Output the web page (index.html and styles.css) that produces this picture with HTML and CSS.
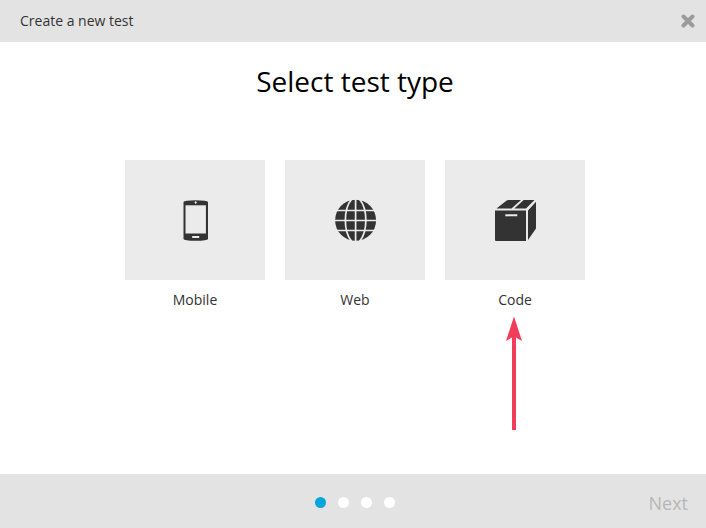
FILE: index.html
```html
<!DOCTYPE html>
<html lang="en">
<head>
<meta charset="utf-8">
<title>Create a new test</title>
<link rel="stylesheet" href="styles.css">
</head>
<body>
<div class="dialog">
  <header class="dialog-header">
    <span>Create a new test</span>
    <button class="close" aria-label="Close"><svg width="14" height="14" viewBox="0 0 14 14"><path d="M2.5 2.5l9 9M11.5 2.5l-9 9" stroke="#9b9b9b" stroke-width="4" stroke-linecap="round"/></svg></button>
  </header>
  <main class="content">
    <h1>Select test type</h1>
    <div class="options">
      <div class="option">
        <div class="tile">
          <svg width="42" height="42" viewBox="0 0 42 42"><path d="M8.5 3Q9 1.2 20.7 1.2T33 3V40Q32.5 41.8 20.7 41.8T8.5 40Z" fill="#333"/><path d="M10.5 6.3h20.4v28.2H10.5z" fill="#ebebeb"/><path d="M17.2 37h7v2h-7zM20.7 2l1.3 1.5-1.3 1.5-1.3-1.5z" fill="#ebebeb"/></svg>
        </div>
        <span>Mobile</span>
      </div>
      <div class="option">
        <div class="tile">
          <svg width="42" height="42" viewBox="0 0 42 42"><circle cx="20.6" cy="21.3" r="20.5" fill="#333"/><g fill="none" stroke="#ebebeb" stroke-width="1.7"><path d="M20.6 0v42M0 21.5h42M2 11.5h38M2 31.5h38"/><path d="M16.8 0C8.2 10 8.2 32.6 16.8 42.6M24.4 0C33 10 33 32.6 24.4 42.6"/></g></svg>
        </div>
        <span>Web</span>
      </div>
      <div class="option">
        <div class="tile">
          <svg width="42" height="42" viewBox="0 0 42 42"><path d="M0 11.5h31V42H1Q0 42 0 41zM1.5 9.5L11.7 1.6Q12.5 1 13.5 1H26L16.5 9.5zM19.3 9.5L28.7 1H39.5L31 9.5zM33 11.5L41 2.7V29.5L33 41z" fill="#333"/><path d="M10.3 15.3h12v2h-12z" fill="#ebebeb"/></svg>
        </div>
        <span>Code</span>
        <svg class="arrow" width="18" height="115" viewBox="0 0 18 115"><path d="M9 1.5L17 26 11 22.5V115H7V22.5L1 26z" fill="#f13d5a"/></svg>
      </div>
    </div>
  </main>
  <footer class="dialog-footer">
    <div class="dots"><i class="active"></i><i></i><i></i><i></i></div>
    <button class="next" disabled>Next</button>
  </footer>
</div>
</body>
</html>
```
FILE: styles.css
```css
* { box-sizing: border-box; }
body { margin: 0; background: #fff; color: #333; font: 14px/20px "Open Sans", sans-serif; }
button { border: 0; padding: 0; background: none; font: inherit; }
.dialog { height: 528px; display: flex; flex-direction: column; overflow: hidden; }
.dialog-header { flex: 0 0 42px; display: flex; align-items: center; justify-content: space-between; padding: 0 11px 0 20px; background: #e3e3e3; }
.close { display: flex; }
.content { flex: 1; padding: 19px 0 0 4px; }
h1 { margin: 0; text-align: center; color: #000; font-size: 28px; line-height: 40px; font-weight: 400; }
.options { display: flex; justify-content: center; gap: 20px; margin-top: 59px; }
.option { position: relative; width: 140px; text-align: center; }
.tile { height: 120px; margin-bottom: 10px; padding-left: 2px; display: flex; align-items: center; justify-content: center; background: #ebebeb; }
.option > span { display: block; }
.arrow { position: absolute; left: 60px; top: 155px; }
.dialog-footer { flex: 0 0 54px; display: grid; grid-template-columns: 1fr auto 1fr; align-items: center; padding: 3px 18px 0 22px; background: #e3e3e3; }
.dots { grid-column: 2; display: flex; gap: 12px; }
.dots i { width: 11px; height: 11px; border-radius: 50%; background: #fff; }
.dots .active { background: #00a5db; }
.next { justify-self: end; font-size: 18px; line-height: 24px; color: #b7b7b7; }
```
